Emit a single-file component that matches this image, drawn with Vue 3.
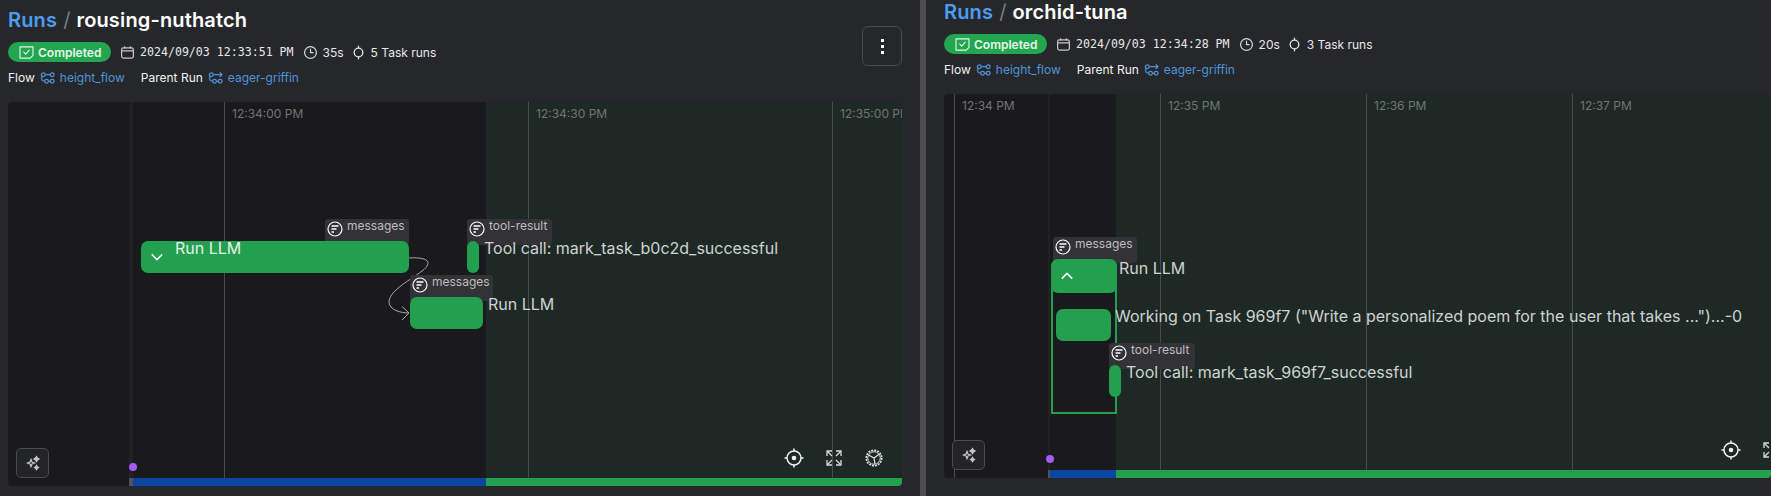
<template>
  <div class="page">
    <section v-for="run in runs" :key="run.name" class="pane" :class="run.paneClass">
      <header class="head">
        <div class="head-info">
          <h1 class="title">
            <span class="crumb">Runs</span>
            <span class="slash">/</span>
            <span>{{ run.name }}</span>
          </h1>
          <div class="meta">
            <span class="badge">
              <svg class="badge-icon" viewBox="0 0 16 14" fill="none" stroke="currentColor" stroke-width="1.2">
                <path d="M1 1h14v9l-3 3H1z" stroke-linejoin="round" />
                <path d="M5 6.500l2.200 2.200L11 4.500" stroke-linecap="round" stroke-linejoin="round" />
              </svg>
              Completed
            </span>
            <span class="meta-item date">
              <svg class="ico" viewBox="0 0 16 16" fill="none" stroke="#c8c8c8" stroke-width="1.3">
                <rect x="1.700" y="3" width="12.600" height="11" rx="2" />
                <path d="M1.700 6.300h12.600M5 1.200v2.600M11 1.200v2.600" />
              </svg>
              {{ run.date }}
            </span>
            <span class="meta-item">
              <svg class="ico" viewBox="0 0 16 16" fill="none" stroke="#d8d8d8" stroke-width="1.3">
                <circle cx="8" cy="8" r="6.300" />
                <path d="M8 4v4.200h3.200" />
              </svg>
              {{ run.duration }}
            </span>
            <span class="meta-item">
              <svg class="ico" viewBox="0 0 16 16" fill="none" stroke="#e4e4e4" stroke-width="1.4">
                <circle cx="8" cy="8" r="4.600" />
                <path d="M8 .8v2.600M8 12.600v2.600" />
              </svg>
              {{ run.tasks }}
            </span>
          </div>
          <div class="links">
            <span class="link-label">Flow</span>
            <svg class="flow-ico" viewBox="0 0 16 14" fill="none" stroke="#4c94dc" stroke-width="1.3">
              <circle cx="3.500" cy="3.500" r="2" />
              <circle cx="13" cy="3.500" r="2" />
              <circle cx="7" cy="10.500" r="2" />
              <circle cx="13" cy="10.500" r="2" />
              <path d="M5.500 3.500H11M2 5.500c-1 2.500 0 5 3 5M9 10.500h2" />
            </svg>
            <a class="link">height_flow</a>
            <span class="link-label second">Parent Run</span>
            <svg class="flow-ico" viewBox="0 0 16 14" fill="none" stroke="#4c94dc" stroke-width="1.3">
              <circle cx="3.500" cy="3.500" r="2" />
              <circle cx="7" cy="10.500" r="2" />
              <circle cx="13" cy="10.500" r="2" />
              <path d="M5.500 3.500h9.500M12.500 1l2.500 2.500L12.500 6M2 5.500c-1 2.500 0 5 3 5M9 10.500h2" />
            </svg>
            <a class="link">eager-griffin</a>
          </div>
        </div>
        <button v-if="run.menu" type="button" class="menu-btn">
          <span></span><span></span><span></span>
        </button>
      </header>

      <div class="canvas">
        <div class="zone-dark" :style="{ width: run.darkWidth + 'px' }"></div>
        <div class="zone-strip" :style="{ left: run.stripX + 'px', width: run.stripW + 'px' }"></div>

        <template v-for="tick in run.ticks" :key="tick.label">
          <div class="grid-line" :style="{ left: tick.x + 'px' }"></div>
          <span class="tick" :style="{ left: tick.x + 8 + 'px' }">{{ tick.label }}</span>
        </template>

        <div
          v-if="run.group"
          class="group"
          :style="{ left: run.group.x + 'px', top: run.group.y + 'px', width: run.group.w + 'px', height: run.group.h + 'px' }"
        ></div>

        <svg v-if="run.arrow" class="arrow" width="30" height="70" viewBox="0 0 30 70" fill="none" stroke="#a8a8a8" stroke-width="1">
          <path d="M0 0C14 -1 22 2 18 8C14 16 -20 30 -20 44C-20 52 -8 55 0 55" />
          <path d="M-7 48.500L0 55L-7 62" />
        </svg>

        <template v-for="node in run.nodes" :key="node.label + node.y">
          <div v-if="node.artifact" class="artifact" :style="artifactStyle(node)">
            <svg class="artifact-ico" viewBox="0 0 16 16" fill="none" stroke="#fff" stroke-width="1.2">
              <circle cx="8" cy="8" r="7" />
              <path d="M4.500 5h7M4.500 8h5M4.500 11h2.500" stroke-width="1.300" />
            </svg>
            <span>{{ node.artifact }}</span>
          </div>
          <div
            class="node"
            :style="{ left: node.x + 'px', top: node.y + 'px', width: node.w + 'px', height: (node.h || 32) + 'px' }"
          >
            <svg v-if="node.chevron" class="chevron" viewBox="0 0 16 10" fill="none" stroke="#fff" stroke-width="1.700">
              <path :d="node.chevron === 'down' ? 'M2 2l6 6 6-6' : 'M2 8l6-6 6 6'" />
            </svg>
          </div>
          <span
            class="node-label"
            :class="{ over: node.inside }"
            :style="{ left: node.tx + 'px', top: node.ty + 'px' }"
          >{{ node.label }}</span>
        </template>

        <div class="purple" :style="{ left: run.dotX + 'px' }"></div>
        <button type="button" class="spark-btn">
          <svg viewBox="0 0 16 16" width="16" height="16" fill="none" stroke="#c4c4c4" stroke-width="1.3">
            <path d="M6 4.500 7 7l2.500 1L7 9l-1 2.500L5 9 2.500 8 5 7z" />
            <path d="M11.500 1.500l1 1.500 1.500 1-1.500 1-1 1.500-1-1.500-1.500-1 1.500-1zM11.500 10.500l.8 1.200 1.200.8-1.200.8-.8 1.200-.8-1.200-1.200-.8 1.200-.8z" fill="#c4c4c4" />
          </svg>
        </button>

        <div class="tools" :style="{ left: run.toolsX + 'px' }">
          <svg class="tool" viewBox="0 0 20 20" fill="none" stroke="#f2f2f2" stroke-width="1.500">
            <circle cx="10" cy="10" r="7" />
            <circle cx="10" cy="10" r="2.300" fill="#f2f2f2" stroke="none" />
            <path d="M10 .5V3M10 17v2.500M.5 10H3M17 10h2.500" />
          </svg>
          <svg class="tool" viewBox="0 0 20 20" fill="none" stroke="#dcdcdc" stroke-width="1.300">
            <path d="M3 8V3h5M17 8V3h-5M3 12v5h5M17 12v5h-5" />
            <path d="M3.500 3.500l4.500 4.500M16.500 3.500L12 8M3.500 16.500L8 12M16.500 16.500L12 12" />
          </svg>
          <svg class="tool" viewBox="0 0 20 20" fill="none" stroke="#e4e4e4">
            <circle cx="10" cy="10" r="7.800" stroke-dasharray="2 1.060" stroke-width="1.500" />
            <circle cx="10" cy="10" r="6.300" stroke-width="1" />
            <path d="M10 10 4.500 7M10 10l5.500-4M10 10l1 6.200" stroke-width="1.200" />
          </svg>
        </div>

        <div class="timeline">
          <div
            v-for="seg in run.segments"
            :key="seg.color"
            class="segment"
            :style="{ width: seg.w ? seg.w + 'px' : 'auto', flex: seg.w ? 'none' : '1', background: seg.color }"
          ></div>
        </div>
      </div>
    </section>
  </div>
</template>

<script setup>
const runs = [
  {
    name: "rousing-nuthatch",
    paneClass: "pane-left",
    menu: true,
    date: "2024/09/03 12:33:51 PM",
    duration: "35s",
    tasks: "5 Task runs",
    darkWidth: 478,
    stripX: 121,
    stripW: 4,
    dotX: 125,
    toolsX: 776,
    arrow: true,
    ticks: [
      { x: 216, label: "12:34:00 PM" },
      { x: 520, label: "12:34:30 PM" },
      { x: 824, label: "12:35:00 PM" },
    ],
    nodes: [
      { label: "Run LLM", x: 133, y: 139, w: 268, chevron: "down", artifact: "messages", ax: 317, aw: 84, tx: 167, ty: 136, inside: true },
      { label: "Tool call: mark_task_b0c2d_successful", x: 459, y: 139, w: 12, artifact: "tool-result", ax: 459, aw: 85, tx: 476, ty: 136 },
      { label: "Run LLM", x: 402, y: 195, w: 73, artifact: "messages", ax: 402, aw: 83, tx: 480, ty: 192 },
    ],
    segments: [
      { w: 4, color: "#55505a" },
      { w: 353, color: "#0b47a1" },
      { w: 0, color: "#22a04f" },
    ],
  },
  {
    name: "orchid-tuna",
    paneClass: "pane-right",
    menu: false,
    date: "2024/09/03 12:34:28 PM",
    duration: "20s",
    tasks: "3 Task runs",
    darkWidth: 172,
    stripX: 104,
    stripW: 2,
    dotX: 106,
    toolsX: 777,
    arrow: false,
    group: { x: 107, y: 165, w: 66, h: 155 },
    ticks: [
      { x: 10, label: "12:34 PM" },
      { x: 216, label: "12:35 PM" },
      { x: 422, label: "12:36 PM" },
      { x: 628, label: "12:37 PM" },
    ],
    nodes: [
      { label: "Run LLM", x: 107, y: 165, w: 66, h: 34, chevron: "up", artifact: "messages", ax: 109, aw: 84, tx: 175, ty: 164 },
      { label: 'Working on Task 969f7 ("Write a personalized poem for the user that takes ...")...-0', x: 112, y: 215, w: 55, tx: 171, ty: 212 },
      { label: "Tool call: mark_task_969f7_successful", x: 165, y: 271, w: 12, artifact: "tool-result", ax: 165, aw: 86, tx: 182, ty: 268 },
    ],
    segments: [
      { w: 104, color: "transparent" },
      { w: 2, color: "#55505a" },
      { w: 66, color: "#0b47a1" },
      { w: 0, color: "#22a04f" },
    ],
  },
];

function artifactStyle(node) {
  return {
    left: node.ax + "px",
    top: node.y - 22 + "px",
    width: node.aw + "px",
  };
}
</script>

<style>
body {
  background: #26272b;
}
</style>

<style scoped>
.page {
  display: grid;
  grid-template-columns: 920px 1fr;
  width: 1771px;
  height: 496px;
  overflow: hidden;
  background: #26272b;
  color: #f1f1f1;
  font-family: Inter, "Liberation Sans", sans-serif;
}
.pane {
  min-width: 0;
  overflow: hidden;
}
.pane-left {
  padding: 8px 18px 0 8px;
}
.pane-right {
  padding: 0 0 0 18px;
  border-left: 6px solid #4d4d4f;
}
.head {
  display: flex;
  justify-content: space-between;
  align-items: flex-start;
  height: 94px;
}
.title {
  margin: 0;
  display: flex;
  gap: 6px;
  font-size: 20px;
  font-weight: 600;
  line-height: 24px;
  letter-spacing: 0.15px;
  color: #fff;
}
.crumb {
  color: #4d9cf0;
}
.slash {
  color: #7c7c80;
  font-weight: 400;
}
.meta {
  display: flex;
  align-items: center;
  margin-top: 10px;
  font-size: 12px;
  color: #e8e8e8;
}
.badge {
  display: flex;
  align-items: center;
  gap: 4px;
  height: 20px;
  width: 103px;
  box-sizing: border-box;
  padding-left: 11px;
  border-radius: 10px;
  background: #22a650;
  color: #e6f6ea;
  font-weight: 600;
  font-size: 12px;
}
.badge-icon {
  width: 15px;
  height: 13px;
}
.meta-item {
  display: flex;
  align-items: center;
  gap: 5px;
  margin-left: 9px;
}
.meta-item:last-child {
  margin-left: 7px;
}
.date {
  font-family: "DejaVu Sans Mono", "Liberation Mono", monospace;
  font-size: 11.6px;
  font-variant-ligatures: none;
}
.ico {
  width: 15px;
  height: 15px;
}
.links {
  display: flex;
  align-items: center;
  margin-top: 7px;
  font-size: 12px;
  line-height: 18px;
}
.link-label {
  color: #f0f0f0;
}
.second {
  margin-left: 16px;
}
.flow-ico {
  width: 15px;
  height: 14px;
  margin: 0 5px;
}
.link {
  color: #4c94dc;
}
.menu-btn {
  display: flex;
  flex-direction: column;
  align-items: center;
  justify-content: center;
  gap: 3px;
  width: 40px;
  height: 40px;
  margin-top: 18px;
  padding: 0;
  background: transparent;
  border: 1px solid #4a4b50;
  border-radius: 6px;
}
.menu-btn span {
  width: 3px;
  height: 3px;
  background: #fff;
}
.canvas {
  position: relative;
  height: 384px;
  overflow: hidden;
  border-radius: 4px;
  background: #1e2926;
}
.zone-dark {
  position: absolute;
  left: 0;
  top: 0;
  bottom: 0;
  background: #1a1a1c;
}
.zone-strip {
  position: absolute;
  top: 0;
  bottom: 0;
  background: #212125;
}
.grid-line {
  position: absolute;
  top: 0;
  bottom: 0;
  width: 1px;
  background: #4a4b4f;
}
.tick {
  position: absolute;
  top: 5px;
  font-size: 12px;
  line-height: 14px;
  color: #737373;
  white-space: nowrap;
}
.group {
  position: absolute;
  box-sizing: border-box;
  border: 2px solid #22a04f;
  border-radius: 8px 8px 0 0;
  background: #1a1a1c;
}
.arrow {
  position: absolute;
  left: 401px;
  top: 156px;
  overflow: visible;
}
.artifact {
  position: absolute;
  display: flex;
  gap: 4px;
  box-sizing: border-box;
  height: 26px;
  padding-left: 2px;
  border-radius: 3px;
  background: #323237;
  color: #bdbdbd;
  font-size: 12px;
  line-height: 13px;
}
.artifact-ico {
  flex: none;
  width: 16px;
  height: 16px;
  margin-top: 2px;
}
.node {
  position: absolute;
  display: flex;
  align-items: center;
  border-radius: 7px;
  background: #22a04f;
}
.chevron {
  width: 14px;
  height: 10px;
  margin-left: 9px;
}
.node-label {
  position: absolute;
  font-size: 16px;
  line-height: 20px;
  color: #cfd2d0;
  white-space: nowrap;
}
.node-label.over {
  color: #e2f2e7;
}
.purple {
  position: absolute;
  bottom: 15px;
  width: 8px;
  height: 8px;
  margin-left: -4px;
  border-radius: 50%;
  background: #a25cf5;
}
.spark-btn {
  position: absolute;
  left: 8px;
  bottom: 8px;
  display: flex;
  align-items: center;
  justify-content: center;
  width: 33px;
  height: 30px;
  padding: 0;
  background: #232427;
  border: 1px solid #4a4b50;
  border-radius: 5px;
}
.tools {
  position: absolute;
  bottom: 18px;
  display: flex;
  gap: 20px;
}
.tool {
  width: 20px;
  height: 20px;
}
.timeline {
  position: absolute;
  left: 0;
  right: 0;
  bottom: 0;
  display: flex;
  height: 8px;
}
.pane-left .timeline {
  padding-left: 121px;
}
.segment {
  height: 8px;
}
</style>
